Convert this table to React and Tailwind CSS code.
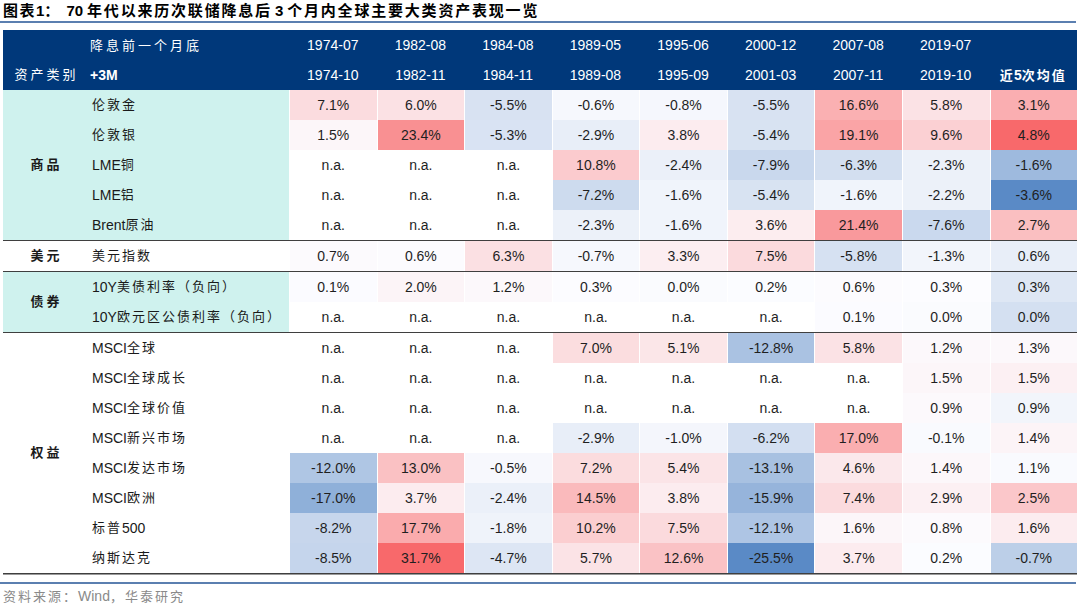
import React from "react";

const N = null;
const sections = [
  {
    cat: "商品",
    teal: true,
    rows: [
      ["伦敦金", [7.1, 6.0, -5.5, -0.6, -0.8, -5.5, 16.6, 5.8, 3.1]],
      ["伦敦银", [1.5, 23.4, -5.3, -2.9, 3.8, -5.4, 19.1, 9.6, 4.8]],
      ["LME铜", [N, N, N, 10.8, -2.4, -7.9, -6.3, -2.3, -1.6]],
      ["LME铝", [N, N, N, -7.2, -1.6, -5.4, -1.6, -2.2, -3.6]],
      ["Brent原油", [N, N, N, -2.3, -1.6, 3.6, 21.4, -7.6, 2.7]],
    ],
  },
  {
    cat: "美元",
    teal: false,
    rows: [["美元指数", [0.7, 0.6, 6.3, -0.7, 3.3, 7.5, -5.8, -1.3, 0.6]]],
  },
  {
    cat: "债券",
    teal: true,
    rows: [
      ["10Y美债利率（负向）", [0.1, 2.0, 1.2, 0.3, 0.0, 0.2, 0.6, 0.3, 0.3]],
      ["10Y欧元区公债利率（负向）", [N, N, N, N, N, N, 0.1, 0.0, 0.0]],
    ],
  },
  {
    cat: "权益",
    teal: false,
    rows: [
      ["MSCI全球", [N, N, N, 7.0, 5.1, -12.8, 5.8, 1.2, 1.3]],
      ["MSCI全球成长", [N, N, N, N, N, N, N, 1.5, 1.5]],
      ["MSCI全球价值", [N, N, N, N, N, N, N, 0.9, 0.9]],
      ["MSCI新兴市场", [N, N, N, -2.9, -1.0, -6.2, 17.0, -0.1, 1.4]],
      ["MSCI发达市场", [-12.0, 13.0, -0.5, 7.2, 5.4, -13.1, 4.6, 1.4, 1.1]],
      ["MSCI欧洲", [-17.0, 3.7, -2.4, 14.5, 3.8, -15.9, 7.4, 2.9, 2.5]],
      ["标普500", [-8.2, 17.7, -1.8, 10.2, 7.5, -12.1, 1.6, 0.8, 1.6]],
      ["纳斯达克", [-8.5, 31.7, -4.7, 5.7, 12.6, -25.5, 3.7, 0.2, -0.7]],
    ],
  },
];

const top = ["1974-07", "1982-08", "1984-08", "1989-05", "1995-06", "2000-12", "2007-08", "2019-07", ""];
const bottom = ["1974-10", "1982-11", "1984-11", "1989-08", "1995-09", "2001-03", "2007-11", "2019-10"];

const MIN = [90, 138, 198];
const MID = [252, 252, 255];
const MAX = [248, 105, 107];

function mix(a, b, t) {
  return `rgb(${a.map((x, i) => Math.round(x + (b[i] - x) * t)).join(",")})`;
}

function heat(v, last) {
  if (v === null) return "#ffffff";
  const lo = last ? -3.6 : -25.5;
  const mid = last ? 1.2 : 0.3;
  const hi = last ? 4.8 : 31.7;
  if (v >= mid) return mix(MID, MAX, Math.min(1, (v - mid) / (hi - mid)));
  return mix(MID, MIN, Math.min(1, (mid - v) / (mid - lo)));
}

function Mixed({ text, cjkClass = "text-[13px] tracking-[2px]" }) {
  const parts = text.split(/([\u3000-\u9fff\uff00-\uffef]+)/).filter(Boolean);
  return (
    <>
      {parts.map((p, i) =>
        /[\u3000-\u9fff\uff00-\uffef]/.test(p) ? (
          <span key={i} className={cjkClass}>
            {p}
          </span>
        ) : (
          <span key={i}>{p}</span>
        )
      )}
    </>
  );
}

const font = { fontFamily: "'Liberation Sans', 'Noto Sans CJK SC', sans-serif" };

export default function App() {
  return (
    <div className="w-[1080px] h-[606px] bg-white text-[#1a1a1a] overflow-hidden" style={font}>
      {/* Title */}
      <div className="h-[21px] pl-[3px] flex items-center text-[15px] font-bold text-black leading-none">
        <span className="tracking-[1.5px]">图表</span>
        <span>1</span>
        <span>：</span>
        <span className="ml-[7px]">70</span>
        <span className="ml-[4px] tracking-[1.8px]">年代以来历次联储降息后</span>
        <span className="ml-[3px]">3</span>
        <span className="ml-[4px] tracking-[1.8px]">个月内全球主要大类资产表现一览</span>
      </div>
      <div className="h-[2px] w-[1076px] bg-[#5b7fb0]" />

      <div className="ml-[3px] w-[1074px] mt-[7px]">
        {/* Header */}
        <div className="bg-[#00387a] text-white text-[14px]">
          <div className="flex h-[30px] items-center">
            <div className="w-[85px]" />
            <div className="w-[201px] pl-[2px]">
              <Mixed text="降息前一个月底" cjkClass="text-[13px] tracking-[3px]" />
            </div>
            {top.map((t, i) => (
              <div key={i} className="flex-1 text-center">
                {t}
              </div>
            ))}
          </div>
          <div className="flex h-[30px] items-center">
            <div className="w-[85px] text-center text-[13px] tracking-[3px] pl-[2px]">资产类别</div>
            <div className="w-[201px] pl-[2px] font-bold">+3M</div>
            {bottom.map((t, i) => (
              <div key={i} className="flex-1 text-center">
                {t}
              </div>
            ))}
            <div className="flex-1 text-center font-bold text-[13px]">
              <span className="tracking-[1px]">近</span>
              <span className="text-[14px]">5</span>
              <span className="tracking-[2px]">次均值</span>
            </div>
          </div>
        </div>

        {/* Body */}
        {sections.map((s) => (
          <React.Fragment key={s.cat}>
            <div className="flex">
              <div
                className={`w-[85px] flex items-center justify-center text-[13px] font-bold tracking-[3px] pl-[2px] ${
                  s.teal ? "bg-[#cff2ee]" : "bg-white"
                }`}
              >
                {s.cat}
              </div>
              <div className="flex-1 flex flex-col">
                {s.rows.map(([name, vals]) => (
                  <div key={name} className="flex h-[30px]">
                    <div
                      className={`w-[201px] pl-[4px] flex items-center text-[14px] whitespace-nowrap ${
                        s.teal ? "bg-[#cff2ee]" : "bg-white"
                      }`}
                    >
                      <Mixed text={name} />
                    </div>
                    {vals.map((v, i) => (
                      <div
                        key={i}
                        className="flex-1 flex items-center justify-center text-[14px] text-[#1f1f1f] border-l border-white"
                        style={{ backgroundColor: heat(v, i === 8) }}
                      >
                        {v === null ? "n.a." : `${v.toFixed(1)}%`}
                      </div>
                    ))}
                  </div>
                ))}
              </div>
            </div>
            <div className="h-px bg-[#3f3f3f]" />
          </React.Fragment>
        ))}
        <div className="h-px bg-[#9a9a9a]" />
      </div>

      {/* Footer */}
      <div className="mt-[7px] h-[2px] w-[1076px] bg-[#5b7fb0]" />
      <div className="pl-[3px] pt-[3px] text-[14px] text-[#8a8a8a] leading-[18px]">
        <span className="text-[13px] tracking-[2px]">资料来源：</span>
        <span>Wind</span>
        <span className="text-[13px] tracking-[2px]">，华泰研究</span>
      </div>
    </div>
  );
}
